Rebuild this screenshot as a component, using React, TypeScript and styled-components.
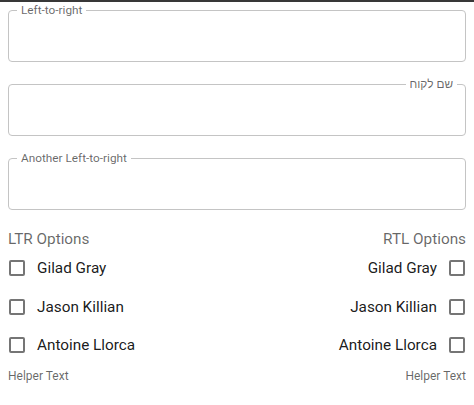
import React from "react";
import styled, { createGlobalStyle } from "styled-components";

const GlobalStyle = createGlobalStyle`
  html, body { margin: 0; padding: 0; background: #ffffff; }
  body {
    font-family: Roboto, "Liberation Sans", "DejaVu Sans", sans-serif;
    -webkit-font-smoothing: antialiased;
  }
  * { box-sizing: border-box; }
`;

const TopEdge = styled.div`
  height: 2px;
  background: #383838;
`;

const Page = styled.main`
  display: flex;
  flex-direction: column;
  padding: 2px 8px 0;
`;

const Fields = styled.div`
  display: flex;
  flex-direction: column;
  gap: 16px;
`;

const Field = styled.fieldset`
  margin: 0;
  padding: 0 8px;
  min-width: 0;
  border: 1px solid #c4c4c4;
  border-radius: 4px;
`;

const Legend = styled.legend`
  padding: 0 4px;
  font-size: 11.8px;
  line-height: 12px;
  color: rgba(0, 0, 0, 0.6);
`;

const InputArea = styled.div`
  height: 45px;
`;

const Options = styled.div`
  display: flex;
  justify-content: space-between;
  margin-top: 20px;
`;

const Group = styled.div`
  display: flex;
  flex-direction: column;
`;

const GroupLabel = styled.div`
  font-size: 15.3px;
  line-height: 19px;
  color: rgba(0, 0, 0, 0.6);
`;

const Row = styled.label`
  display: flex;
  align-items: center;
  gap: 12px;
  height: 38.5px;
  font-size: 15.3px;
  color: rgba(0, 0, 0, 0.9);
`;

const Box = styled.span`
  width: 16px;
  height: 16px;
  margin-inline-start: 1px;
  border: 2px solid #757575;
  border-radius: 2px;
  flex: none;
`;

const Helper = styled.div`
  margin-top: 4px;
  font-size: 12px;
  line-height: 15px;
  color: rgba(0, 0, 0, 0.6);
`;

const names = ["Gilad Gray", "Jason Killian", "Antoine Llorca"];

const fields: { label: string; dir: "ltr" | "rtl" }[] = [
  { label: "Left-to-right", dir: "ltr" },
  { label: "שם לקוח", dir: "rtl" },
  { label: "Another Left-to-right", dir: "ltr" },
];

const OptionGroup: React.FC<{ title: string; dir: "ltr" | "rtl" }> = ({ title, dir }) => (
  <Group dir={dir}>
    <GroupLabel>{title}</GroupLabel>
    {names.map((n) => (
      <Row key={n}>
        <Box />
        <span>{n}</span>
      </Row>
    ))}
    <Helper>Helper Text</Helper>
  </Group>
);

export default function App() {
  return (
    <>
      <GlobalStyle />
      <TopEdge />
      <Page>
        <Fields>
          {fields.map((f) => (
            <Field key={f.label} dir={f.dir}>
              <Legend>{f.label}</Legend>
              <InputArea />
            </Field>
          ))}
        </Fields>
        <Options>
          <OptionGroup title="LTR Options" dir="ltr" />
          <OptionGroup title="RTL Options" dir="rtl" />
        </Options>
      </Page>
    </>
  );
}
